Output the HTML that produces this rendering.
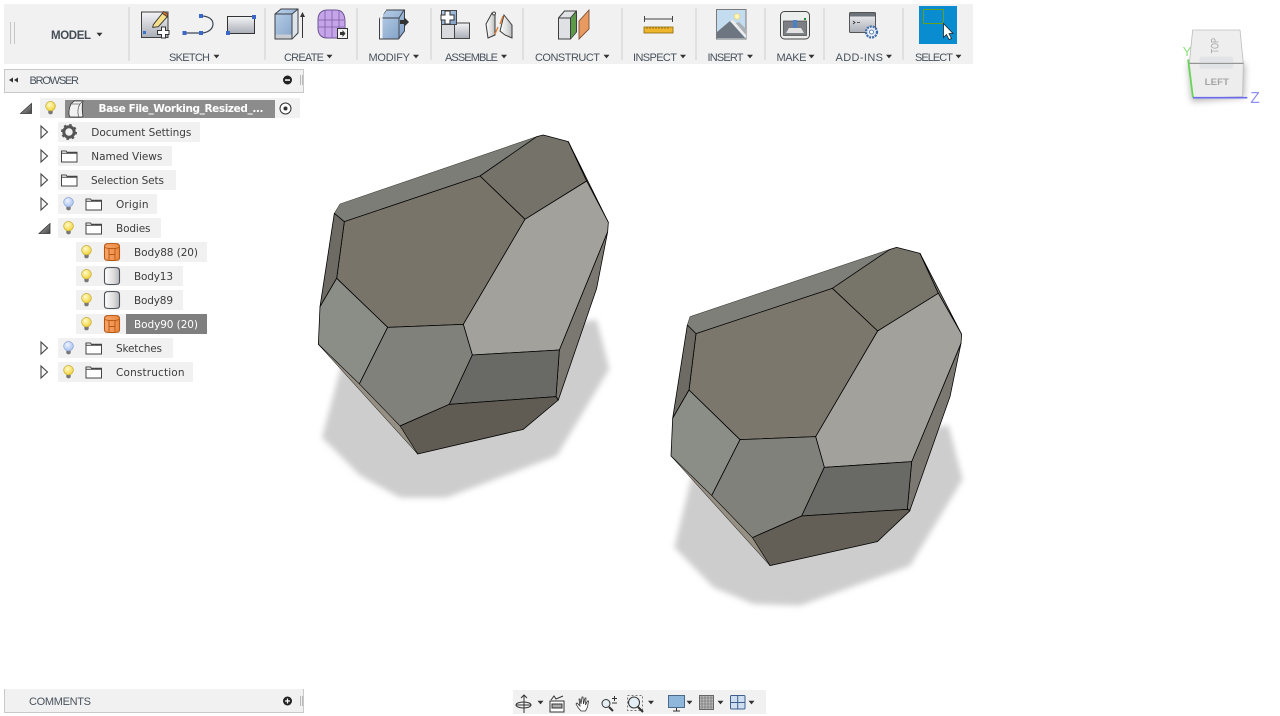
<!DOCTYPE html>
<html><head><meta charset="utf-8"><title>Fusion 360</title>
<style>
html,body{margin:0;padding:0;background:#fff;overflow:hidden}
svg{display:block}
.t{font-family:"DejaVu Sans","Liberation Sans",sans-serif;font-size:10.5px;fill:#3c3c3c}
.l{font-family:"Liberation Sans",sans-serif;font-size:11px;fill:#48525d}
</style></head><body>
<svg width="1280" height="716" viewBox="0 0 1280 716" xmlns="http://www.w3.org/2000/svg">
<defs>
<filter id="b" x="-20%" y="-20%" width="140%" height="140%"><feGaussianBlur stdDeviation="9"/></filter>
<filter id="b2" x="-40%" y="-40%" width="180%" height="180%"><feGaussianBlur stdDeviation="10"/></filter>
<linearGradient id="g1" x1="0" y1="0" x2="0" y2="1"><stop offset="0" stop-color="#f4f4f6"/><stop offset="1" stop-color="#a9adb6"/></linearGradient>
<linearGradient id="g2" x1="0" y1="0" x2="1" y2="1"><stop offset="0" stop-color="#b9d0e8"/><stop offset="1" stop-color="#7f9fc6"/></linearGradient>
<linearGradient id="gb" x1="0" y1="0" x2="1" y2="0"><stop offset="0" stop-color="#fff"/><stop offset=".6" stop-color="#ddd"/><stop offset="1" stop-color="#b5b7ba"/></linearGradient>
<linearGradient id="gt" x1="0" y1="0" x2="1" y2="1"><stop offset="0" stop-color="#bbb"/><stop offset="1" stop-color="#444"/></linearGradient>
<linearGradient id="go" x1="0" y1="0" x2="1" y2="0"><stop offset="0" stop-color="#f7a66b"/><stop offset="1" stop-color="#e98a44"/></linearGradient>
<radialGradient id="by" cx=".4" cy=".35" r=".7"><stop offset="0" stop-color="#fffbc8"/><stop offset="1" stop-color="#f0d030"/></radialGradient>
<radialGradient id="bb" cx=".4" cy=".35" r=".7"><stop offset="0" stop-color="#eef4ff"/><stop offset="1" stop-color="#a3bdec"/></radialGradient>
<path id="c" d="M0 -.3h6l-3 3.700z" fill="#333"/>
<g id="by1"><path d="M-2.200 3.600h4.400v2.400l-1 1.200h-2.400l-1-1.200z" fill="#777"/><circle cx="0" cy="-.8" r="4.800" fill="url(#by)" stroke="#bda021" stroke-width=".6"/></g>
<g id="bb1"><path d="M-2.200 3.600h4.400v2.400l-1 1.200h-2.400l-1-1.200z" fill="#777"/><circle cx="0" cy="-.8" r="4.800" fill="url(#bb)" stroke="#7f9ad0" stroke-width=".6"/></g>
<path id="fo" d="M-7.500 -5.500h4.500l1 1.300h10v9.700h-15.500z M-7.500 -3.200h15.500" fill="#fff" stroke="#444" stroke-width="1"/>
<path id="ar" d="M-3.500 -6l6.500 6l-6.500 6z" fill="#f6f6f6" stroke="#444" stroke-width="1.100"/>
<g id="cyo"><path d="M-7.500 -5c0-3.500 2-3.500 7.500-3.500s7.500 0 7.500 3.500v10.500c0 3-2 3-7.500 3s-7.500 0-7.500-3z" fill="url(#go)" stroke="#b9560f" stroke-width="1.100"/><path d="M-7 -4.500c3 1.500 11 1.500 14 0M-3 -3.300v11.300M3 -3.300v5.800H-3M3 2.500v5.500" fill="none" stroke="#b9560f" stroke-width=".9"/></g>
<g id="cyw"><path d="M-7.500 -5c0-3.500 2-3.500 7.500-3.500s7.500 0 7.500 3.500v10.500c0 3-2 3-7.500 3s-7.500 0-7.500-3z" fill="url(#gb)" stroke="#4a5058" stroke-width="1.100"/></g>
</defs>

<!-- Toolbar -->
<rect x="4" y="4" width="969" height="60" fill="#f1f1f1"/>
<path d="M10.500 22v22M14.500 22v22" stroke="#c6c6c6" stroke-width="1"/>
<path d="M129 7v54M265 8v52M357 8v52M431 8v52M523 8v52M622 8v52M696 8v52M765 8v52M824 8v52M903 8v52" stroke="#dcdcdc" stroke-width="1.600"/>
<text x="51" y="39" font-family="Liberation Sans,sans-serif" font-size="11.500" font-weight="700" fill="#444c55" textLength="40" lengthAdjust="spacing">MODEL</text>
<use href="#c" x="96.500" y="33"/>

<!-- Sketch icons -->
<rect x="141.500" y="12" width="26.500" height="25.500" fill="url(#g1)" stroke="#3f3f3f"/>
<rect x="143" y="31" width="3" height="3" fill="#3a74c8"/>
<path d="M153.300 24.700l9-11.400 5 3.400-9 10-5.600 .6z" fill="#f7e08a" stroke="#333" stroke-width=".9"/>
<path d="M162.300 13.300l1.500-2 4 2.700-.5 2.700z" fill="#c96d2a" stroke="#333" stroke-width=".6"/>
<path d="M157.500 30.500h4v-3.500h4v3.500h3.500v4h-3.500v3.500h-4v-3.500h-4z" fill="#fff" stroke="#333"/>
<path d="M184 33h17c7 0 12-4 12-9s-5-8-12-8" fill="none" stroke="#3c4858" stroke-width="1.200"/>
<rect x="182.500" y="31" width="4" height="4" fill="#3a67c8"/><rect x="199" y="31" width="4" height="4" fill="#3a67c8"/><rect x="199" y="14" width="4" height="4" fill="#3a67c8"/>
<rect x="227.500" y="16.500" width="27" height="17" fill="url(#g1)" stroke="#333"/>
<rect x="226" y="31" width="4" height="4" fill="#3a67c8"/><rect x="252" y="15" width="4" height="4" fill="#3a67c8"/>

<!-- Create -->
<path d="M275 14l6-5h17v24l-6 6h-17z" fill="url(#g2)" stroke="#3c4048"/>
<path d="M292.500 14.500l5-5v23l-5 5.500z" fill="#dfe4ea"/>
<path d="M275.500 34.500h16v4h-16z" fill="#c9cdd2"/>
<path d="M275 14h17v25M292 14l6-5" fill="none" stroke="#3c4048"/>
<path d="M302.500 38V14" stroke="#333"/><path d="M300 17l2.500-5 2.500 5z" fill="#333"/>
<path d="M318 20c0-7 4-10 10-10h8c6 0 9 4 9 12v7c0 6-4 9-9 9h-9c-6 0-9-4-9-10z" fill="#c6a4ea" stroke="#6c5590"/>
<path d="M318 20h26M318 27h26M325 11v26M332 10v28M339 11v25" stroke="#7a5ea6" stroke-width=".8" fill="none"/>
<rect x="337.500" y="28.500" width="10" height="10" fill="#f3f3f3" stroke="#333"/><path d="M340 32h2.500v-2l3 3.500-3 3.500v-2H340z" fill="#333"/>

<!-- Modify -->
<path d="M379.500 19l7-9h18v21l-6 8h-19z" fill="url(#g2)" stroke="#3c4048"/>
<path d="M385 18h14v21M399 18l5-8M379.500 18h6" fill="none" stroke="#3c4048" stroke-width=".9"/>
<path d="M380 20c0-4 1-7 4-10h2.500c-3 3-4 6-4 9v19.500H380z" fill="#f4f4f4"/>
<path d="M400 20h4v-3l5 5-5 5v-3h-4z" fill="#333"/>

<!-- Assemble -->
<rect x="441.500" y="24" width="13" height="14.500" fill="#d8dade" stroke="#444"/>
<rect x="454.500" y="23" width="15" height="15.500" fill="url(#g1)" stroke="#444"/>
<rect x="441.500" y="10.500" width="15" height="14" fill="url(#g2)" stroke="#444"/>
<path d="M441 15h4v-4h5v4h4v5h-4v4h-5v-4h-4z" fill="#fff" stroke="#333"/>
<path d="M486 24l6-11h3v22l-7 3z" fill="url(#gb)" stroke="#3c3c3c"/><path d="M504 15l8 10v13l-7-3-5-4z" fill="url(#gb)" stroke="#3c3c3c"/>
<path d="M500 24l3-8M495 34l3-7" stroke="#e2782a" stroke-width="1.300"/><circle cx="494" cy="13.500" r="1.500" fill="#fff" stroke="#444"/>

<!-- Construct -->
<path d="M558.500 18l6-7h12v21l-6 7h-12z" fill="#dfe1e4" stroke="#3e3e3e"/>
<path d="M571 18.500l5-7v20l-5 7z" fill="#5c9a4a"/>
<path d="M570.500 18v21M558.500 18h12l6-7" fill="none" stroke="#3e3e3e"/>
<path d="M579 21l10-11v19l-10 10z" fill="#e89a60" stroke="#7a5034" stroke-width=".9"/>

<!-- Inspect -->
<path d="M644.500 16v6M672.500 16v6M644.500 19h28" stroke="#444" fill="none"/>
<rect x="644" y="27" width="29" height="6" fill="#eeb62c" stroke="#8c6a10" stroke-width=".8"/>
<path d="M647 27v2M650 27v2M653 27v2M656 27v2M659 27v2M662 27v2M665 27v2M668 27v2" stroke="#7c5c10" stroke-width=".7"/>

<!-- Insert -->
<rect x="716.500" y="9.500" width="29.500" height="29.500" fill="#c4dcef" stroke="#7a7a7a"/>
<circle cx="737" cy="16.500" r="2.800" fill="#fff5c0" stroke="#f0d060" stroke-width=".7"/>
<path d="M717 32l13-11 15 17H717z" fill="#6d7580"/><path d="M733 24l6-2 7 7v8z" fill="#aab0b6"/><path d="M730 21l3-1 13 15v3z" fill="#eee"/>

<!-- Make -->
<rect x="780.500" y="11.500" width="29" height="27.500" rx="4" fill="#eceded" stroke="#454545"/>
<rect x="783.500" y="21" width="23" height="14.500" fill="#7c8084" stroke="#444" stroke-width=".7"/>
<rect x="793" y="20" width="4" height="8" fill="#4a80c8"/><path d="M786 33l3-5h12l3 5z" fill="#e2e2e2"/>
<rect x="804" y="18" width="2" height="2" fill="#1d8a2e"/>

<!-- Add-ins -->
<rect x="849.500" y="12.500" width="26" height="20" rx="1" fill="url(#g1)" stroke="#555"/>
<rect x="850" y="13" width="25" height="3.500" fill="#6c7279"/>
<path d="M853 21l2 1.500-2 1.500M857 22.500h3" fill="none" stroke="#333" stroke-width=".8"/>
<circle cx="871.500" cy="32" r="5.500" fill="#e8eef6" stroke="#3c6aa8" stroke-width="2.200" stroke-dasharray="2 1"/><circle cx="871.500" cy="32" r="2" fill="#fff" stroke="#3c6aa8" stroke-width=".8"/>

<!-- Select -->
<rect x="919" y="6" width="38" height="38" fill="#0a8dd0"/>
<rect x="923.500" y="9.500" width="20" height="14" fill="none" stroke="#68a01e"/>
<path d="M943.500 23.500v14l3-3 2.500 5 2.500-1-2.500-5h4z" fill="#fff" stroke="#222" stroke-width=".8"/>

<!-- Toolbar labels -->
<g class="l">
<text x="169" y="61" textLength="41" lengthAdjust="spacing">SKETCH</text><use href="#c" x="213.500" y="55"/>
<text x="284" y="61" textLength="40" lengthAdjust="spacing">CREATE</text><use href="#c" x="326.500" y="55"/>
<text x="368.500" y="61" textLength="41.500" lengthAdjust="spacing">MODIFY</text><use href="#c" x="413" y="55"/>
<text x="445" y="61" textLength="53" lengthAdjust="spacing">ASSEMBLE</text><use href="#c" x="501" y="55"/>
<text x="535" y="61" textLength="65" lengthAdjust="spacing">CONSTRUCT</text><use href="#c" x="603.500" y="55"/>
<text x="633" y="61" textLength="44" lengthAdjust="spacing">INSPECT</text><use href="#c" x="680" y="55"/>
<text x="707.500" y="61" textLength="36" lengthAdjust="spacing">INSERT</text><use href="#c" x="747" y="55"/>
<text x="776.500" y="61" textLength="30" lengthAdjust="spacing">MAKE</text><use href="#c" x="808.500" y="55"/>
<text x="835.500" y="61" textLength="47.500" lengthAdjust="spacing">ADD-INS</text><use href="#c" x="886" y="55"/>
<text x="915" y="61" textLength="38" lengthAdjust="spacing">SELECT</text><use href="#c" x="955.500" y="55"/>
</g>

<!-- Browser header -->
<rect x="4.500" y="69.500" width="299" height="23" fill="#f1f1f1" stroke="#c9c9c9"/>
<path d="M9 80l4-2.500v5zM14 80l4-2.500v5z" fill="#333"/>
<text class="l" x="29.500" y="84" textLength="49.500" lengthAdjust="spacing">BROWSER</text>
<circle cx="287.500" cy="80" r="4.500" fill="#222"/><rect x="285" y="79.300" width="5" height="1.500" fill="#fff"/>
<path d="M300.500 75v10M302.500 75v10" stroke="#aaa" stroke-width=".8"/>

<!-- Comments -->
<path d="M4.500 689v23.500H303.500V689" fill="#f1f1f1" stroke="#c9c9c9"/>
<text class="l" x="29" y="705" textLength="62" lengthAdjust="spacing">COMMENTS</text>
<circle cx="287.500" cy="701" r="4.500" fill="#222"/><path d="M285 701h5M287.500 698.500v5" stroke="#fff" stroke-width="1.300"/>
<path d="M300.500 696v10M302.500 696v10" stroke="#aaa" stroke-width=".8"/>

<!-- Tree backgrounds -->
<g fill="#f1f1f1">
<rect x="40" y="98" width="260" height="20"/>
<rect x="58" y="122" width="142" height="20"/>
<rect x="58" y="146" width="114" height="20"/>
<rect x="58" y="170" width="118" height="20"/>
<rect x="58" y="194" width="99" height="20"/>
<rect x="58" y="218" width="103" height="20"/>
<rect x="76" y="242" width="131" height="20"/>
<rect x="76" y="266" width="107" height="20"/>
<rect x="76" y="290" width="107" height="20"/>
<rect x="76" y="314" width="131" height="20"/>
<rect x="58" y="338" width="115" height="20"/>
<rect x="58" y="362" width="135" height="20"/>
</g>
<rect x="65" y="100" width="210" height="18" fill="#8c8c8c"/>
<rect x="126" y="314" width="81" height="20" fill="#7f7f7f"/>

<!-- Tree icons -->
<path d="M20.500 113.500l11-10v10z" fill="url(#gt)" stroke="#333" stroke-width=".8"/>
<path d="M39 233.500l11-10v10z" fill="url(#gt)" stroke="#333" stroke-width=".8"/>
<use href="#ar" x="44.500" y="132"/><use href="#ar" x="44.500" y="156"/><use href="#ar" x="44.500" y="180"/><use href="#ar" x="44.500" y="204"/><use href="#ar" x="44.500" y="348"/><use href="#ar" x="44.500" y="372"/>
<use href="#by1" x="50.500" y="107"/><use href="#bb1" x="68.500" y="203"/><use href="#by1" x="68.500" y="227"/><use href="#by1" x="86.500" y="251"/><use href="#by1" x="86.500" y="275"/><use href="#by1" x="86.500" y="299"/><use href="#by1" x="86.500" y="323"/><use href="#bb1" x="68.500" y="347"/><use href="#by1" x="68.500" y="371"/>
<path d="M71 104l3-3h9c-1 4-1 11 0 15l-1 1H70c-2-3-1-9 1-13z" fill="#f2f2f2" stroke="#333" stroke-width=".8"/><path d="M79 117c-2-4-1-10 1-13l3-3M71 104h9" fill="none" stroke="#666" stroke-width=".8"/>
<circle cx="285.500" cy="108.500" r="5.500" fill="#fff" stroke="#333"/><circle cx="285.500" cy="108.500" r="2" fill="#333"/>
<circle cx="69" cy="132" r="5.200" fill="none" stroke="#555" stroke-width="3"/><circle cx="69" cy="132" r="7" fill="none" stroke="#555" stroke-width="2" stroke-dasharray="2.500 3"/>
<use href="#fo" x="69" y="156.500"/><use href="#fo" x="69" y="180.500"/><use href="#fo" x="93.500" y="204.500"/><use href="#fo" x="93.500" y="228.500"/><use href="#fo" x="93.500" y="348.500"/><use href="#fo" x="93.500" y="372.500"/>
<use href="#cyo" x="112" y="252"/><use href="#cyw" x="112" y="276"/><use href="#cyw" x="112" y="300"/><use href="#cyo" x="112" y="324"/>

<!-- Tree text -->
<g class="t">
<text x="98.500" y="112" font-weight="700" style="fill:#fff" textLength="165" lengthAdjust="spacing">Base File_Working_Resized_...</text>
<text x="91.300" y="136" textLength="100" lengthAdjust="spacing">Document Settings</text>
<text x="91.300" y="160" textLength="71" lengthAdjust="spacing">Named Views</text>
<text x="91" y="184" textLength="73" lengthAdjust="spacing">Selection Sets</text>
<text x="116" y="208" textLength="32.500" lengthAdjust="spacing">Origin</text>
<text x="116" y="232" textLength="34.500" lengthAdjust="spacing">Bodies</text>
<text x="134" y="256" textLength="64" lengthAdjust="spacing">Body88 (20)</text>
<text x="134" y="280" textLength="39" lengthAdjust="spacing">Body13</text>
<text x="134" y="304" textLength="39" lengthAdjust="spacing">Body89</text>
<text x="134" y="328" style="fill:#fff" textLength="64" lengthAdjust="spacing">Body90 (20)</text>
<text x="116" y="352" textLength="46" lengthAdjust="spacing">Sketches</text>
<text x="116" y="376" textLength="68.500" lengthAdjust="spacing">Construction</text>
</g>

<!-- Gem 1 -->
<g transform="translate(310 125) scale(.33333)" stroke-linejoin="round">
<polygon points="100,700 36,938 150,1052 270,1118 410,1118 740,993 898,732 860,585 700,600" fill="#cdcdcd" filter="url(#b)"/>
<g stroke="#000" stroke-width="2.300">
<polygon points="90,237 680,35 510,153 103,290 73,265" fill="#7c7d76" stroke="#45453f" stroke-width="1.800"/>
<polygon points="510,153 680,35 700,30 775,50 830,168 645,283" fill="#75726a"/>
<polygon points="103,290 510,153 645,283 460,598 233,607 80,460" fill="#78746a"/>
<polygon points="73,265 103,290 80,460 30,545" fill="#6e6a64"/>
<polygon points="775,50 895,292 830,168" fill="#7a7870"/>
<polygon points="893,320 860,490 745,825 738,815 748,675" fill="#7a7870"/>
<polygon points="645,283 830,168 895,292 893,320 748,675 487,690 460,598" fill="#a2a19c"/>
<polygon points="80,460 233,607 148,777 25,658 30,545" fill="#8b8d87"/>
<polygon points="233,607 460,598 487,690 418,838 270,903 148,777" fill="#80817b"/>
<polygon points="487,690 748,675 738,815 418,838" fill="#696a65"/>
<polygon points="270,903 418,838 738,815 745,825 640,913 323,987" fill="#605c54"/>
<polygon points="25,658 148,777 270,903 323,987" fill="#958f84" stroke-width="1.500"/>
</g></g>

<!-- Gem 2 -->
<g transform="translate(660 240) scale(.33333)" stroke-linejoin="round">
<polygon points="100,690 43,922 160,1042 280,1092 420,1097 750,978 908,718 865,555 700,590" fill="#cdcdcd" filter="url(#b)"/>
<g stroke="#000" stroke-width="2.300">
<polygon points="90,230 690,28 517,145 108,281 82,255" fill="#7e7f78" stroke="#45453f" stroke-width="1.800"/>
<polygon points="517,145 690,28 710,22 780,40 835,160 653,273" fill="#77746a"/>
<polygon points="108,281 517,145 653,273 467,590 240,599 87,450" fill="#7b776d"/>
<polygon points="82,255 108,281 87,450 38,535" fill="#6e6a64"/>
<polygon points="780,40 905,283 835,160" fill="#7a7870"/>
<polygon points="903,310 870,470 750,810 742,808 755,665" fill="#7a7870"/>
<polygon points="653,273 835,160 905,283 903,310 755,665 493,682 467,590" fill="#a2a19c"/>
<polygon points="87,450 240,599 155,767 33,648 38,535" fill="#8b8d87"/>
<polygon points="240,599 467,590 493,682 425,828 277,893 155,767" fill="#80817b"/>
<polygon points="493,682 755,665 742,808 425,828" fill="#696a65"/>
<polygon points="277,893 425,828 742,808 750,812 652,905 330,977" fill="#635f57"/>
<polygon points="33,648 155,767 277,893 330,977" fill="#958f84" stroke-width="1.500"/>
</g></g>

<!-- View cube -->
<g transform="translate(1170 20) scale(.33333)">
<polygon points="55,130 225,130 222,232 65,245" fill="#777" opacity=".55" filter="url(#b2)"/>
<polygon points="68,30 210,30 220,130 58,130" fill="#eeeeee" stroke="#bdbdbd" stroke-width="2.500"/>
<polygon points="58,130 220,130 218,230 70,235" fill="#ededed" stroke="#bdbdbd" stroke-width="2.500"/>
<rect x="88" y="110" width="102" height="36" rx="8" fill="#e2e3e6"/>
<path d="M58 130H220" stroke="#8a8a8a" stroke-width="3"/>
<text transform="translate(146 100) rotate(-90)" font-family="Liberation Sans,sans-serif" font-size="32" fill="#a5a5a5" textLength="46" lengthAdjust="spacingAndGlyphs">TOP</text>
<text x="104" y="195" font-family="Liberation Sans,sans-serif" font-size="28" font-weight="700" fill="#a5a5a5" textLength="73" lengthAdjust="spacingAndGlyphs">LEFT</text>
<path d="M54 118L69 233" stroke="#62d850" stroke-width="5"/>
<path d="M69 233H232" stroke="#6a6af0" stroke-width="5"/>
<text x="38" y="108" font-family="Liberation Sans,sans-serif" font-size="40" fill="#8ee27e">Y</text>
<text x="241" y="249" font-family="Liberation Sans,sans-serif" font-size="46" fill="#8f8ff5">Z</text>
</g>

<!-- Bottom nav -->
<rect x="513" y="690" width="253" height="24" fill="#f1f1f1"/>
<g fill="none" stroke="#333" stroke-width="1">
<path d="M524 695v18M521 698l3-3 3 3M516 705h15"/>
<ellipse cx="523.500" cy="705" rx="7.500" ry="3"/>
<rect x="550" y="701" width="14" height="11" fill="#fff"/><rect x="552" y="704" width="10" height="4" fill="#aaa"/><path d="M551 700l3-4 2 3 7-3"/>
<path d="M581 711c-2-2-4-5-5-7l1-1 3 3-1-7h1l1 5 1-7h1l.5 7 1.500-6h1l-.5 7 2-4h1l-1 6-2 4z" fill="#fff" stroke-width=".8"/>
<circle cx="606" cy="703.500" r="4" fill="#e3eef5"/><path d="M609 707l4 4" stroke-width="2"/><path d="M612 698.500h5M614.500 696v5M612 703h5"/>
<rect x="627.500" y="695.500" width="15" height="15" stroke-dasharray="2 2" stroke="#777"/><circle cx="634" cy="702.500" r="5.500" fill="#e3eef5"/><path d="M638 707l5 5" stroke-width="2"/>
<rect x="668.500" y="695.500" width="16" height="12" fill="#8fb7dc" stroke="#4a6a88"/><path d="M676.500 708v2.500M673 711h7"/>
<rect x="699.500" y="695.500" width="14" height="14" fill="#bbb" stroke="#666"/><path d="M702 696v14M705 696v14M708 696v14M711 696v14M700 698h14M700 701h14M700 704h14M700 707h14" stroke="#666" stroke-width=".6"/>
<rect x="730.500" y="695.500" width="14.500" height="13.500" rx="1" fill="#cfdff0" stroke="#3c5f8f"/><path d="M737.700 696v13M731 702.500h14" stroke="#3c5f8f"/>
</g>
<use href="#c" x="537.500" y="701"/><use href="#c" x="648" y="701"/><use href="#c" x="686.500" y="701"/><use href="#c" x="717.500" y="701"/><use href="#c" x="748.500" y="701"/>
</svg>
</body></html>
